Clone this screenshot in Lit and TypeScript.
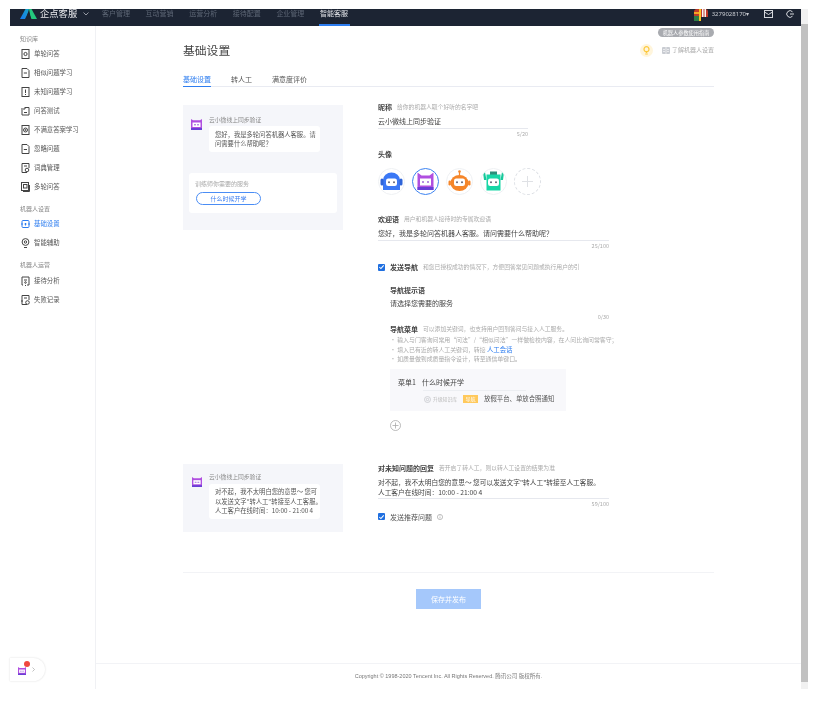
import { LitElement, html, css, svg } from "lit";
import { customElement } from "lit/decorators.js";

const robot = (kind: string, size = 27) => {
  const face = svg`<rect x="8" y="10.5" width="11" height="7.5" rx="2.2" fill="#fff" /><circle cx="11" cy="14.2" r="1" fill="#667" /><circle cx="16" cy="14.2" r="1" fill="#667" />`;
  const inner =
    kind === "blue"
      ? svg`<path d="M5 22 V12 a8.5 7.5 0 0 1 17 0 V22 Z" fill="#3b78f5" /><rect x="2.5" y="10.5" width="3" height="7" rx="1.5" fill="#2f64d8" /><rect x="21.5" y="10.5" width="3" height="7" rx="1.5" fill="#2f64d8" />${face}`
      : kind === "purple"
      ? svg`<path d="M5.5 4.5 L9.5 7.5 H17.5 L21.5 4.5 V22 H5.5 Z" fill="#b04fe0" /><rect x="5.5" y="19" width="16" height="3" fill="#6a3fd6" /><rect x="8" y="10.5" width="11" height="7" fill="#fff" /><circle cx="11" cy="14" r="1" fill="#a06ad8" /><circle cx="16" cy="14" r="1" fill="#a06ad8" />`
      : kind === "orange"
      ? svg`<rect x="12.9" y="3.5" width="1.2" height="4" fill="#f5862a" /><circle cx="13.5" cy="3.5" r="1.3" fill="#f5862a" /><ellipse cx="13.5" cy="15" rx="9" ry="8" fill="#f5862a" /><rect x="2.5" y="12.5" width="2.4" height="5" rx="1.2" fill="#f5862a" /><rect x="22.1" y="12.5" width="2.4" height="5" rx="1.2" fill="#f5862a" />${face}`
      : svg`<rect x="10" y="3.5" width="7" height="3.5" fill="#2d8f7b" /><rect x="6.5" y="6.5" width="14" height="16" fill="#18d6a6" /><path d="M3 4 L5 4 L6.5 12 L4 12 Z" fill="#18c89b" /><path d="M24 4 L22 4 L20.5 12 L23 12 Z" fill="#18c89b" />${face}`;
  return html`<svg width=${size} height=${size} viewBox="0 0 27 27">${inner}</svg>`;
};

const smallBot = (size = 11) => html`<svg width=${size} height=${size} viewBox="0 0 11 11">
  <path d="M0 0 L2 1.3 H9 L11 0 V11 H0 Z" fill="#b04fe0" />
  <rect y="9" width="11" height="2" fill="#6a3fd6" />
  <rect x="1.5" y="3.5" width="8" height="4.5" fill="#fff" />
  <path d="M3 5.8 h2 M6 5.8 h2" stroke="#9a5ad8" stroke-width="1" />
</svg>`;

const sideIcon = (kind: number, color = "#444") => html`<svg width="9" height="10" viewBox="0 0 9 10" fill="none" stroke=${color} stroke-width="1">
  ${kind === 0
    ? svg`<rect x="1" y="0.5" width="7" height="9" /><circle cx="4.5" cy="5" r="1.6" />`
    : kind === 1
    ? svg`<path d="M1 0.5 H6 L8 2.5 V9.5 H1 Z" /><path d="M2.8 5 H6" />`
    : kind === 2
    ? svg`<rect x="1" y="0.5" width="7" height="9" /><path d="M4.5 2.5 V6 M4.5 7 V8" />`
    : kind === 3
    ? svg`<path d="M4 1.5 H8 V9 H1 V4" /><path d="M0 3 H4 V1" /><path d="M3 6.5 H6" />`
    : kind === 4
    ? svg`<rect x="1" y="0.5" width="7" height="9" /><circle cx="4.5" cy="5" r="2" /><circle cx="4.5" cy="5" r=".6" />`
    : kind === 5
    ? svg`<path d="M1 0.5 H6 L8 2.5 V9.5 H1 Z" /><path d="M2.8 5.5 H6" />`
    : kind === 6
    ? svg`<path d="M6 9.5 H1 V0.5 H8 V5" /><circle cx="6" cy="7" r="1.8" /><path d="M3 3 H6" />`
    : kind === 7
    ? svg`<rect x="0.5" y="0.5" width="7" height="8" /><rect x="2.5" y="2.5" width="3.5" height="3.5" /><path d="M8.5 3 V9.5 H2" />`
    : kind === 8
    ? svg`<rect x="1" y="1.5" width="7" height="7" rx="1" /><path d="M0 5 H2 M7 5 H9 M3.5 5 H5.5 M4.5 4 V6.5" />`
    : kind === 9
    ? svg`<circle cx="4.5" cy="4" r="3.4" /><circle cx="4.5" cy="4" r="1.2" /><path d="M3 9.5 H6" />`
    : kind === 10
    ? svg`<path d="M2 9 H1 V1 H8 V9 H6" /><path d="M3 4 H6 M4 9.5 H5" /><circle cx="4.5" cy="6.5" r=".8" />`
    : svg`<path d="M6 9.5 H1 V0.5 H8 V5" /><circle cx="6.5" cy="7.5" r="1.8" /><path d="M3 3 H6 M0 6 H2" />`}
</svg>`;

const check = html`<span class="check"><svg width="8" height="8" viewBox="0 0 8 8" fill="none" stroke="#fff" stroke-width="1.2"><path d="M1.5 4 L3.3 5.8 L6.5 2.2" /></svg></span>`;

const nav = ["客户管理", "互动营销", "运营分析", "接待配置", "企业管理", "智能客服"];
const groups: { label: string; items: [string, number][] }[] = [
  {
    label: "知识库",
    items: [["单轮问答", 0], ["相似问题学习", 1], ["未知问题学习", 2], ["问答测试", 3], ["不满意答案学习", 4], ["忽略问题", 5], ["词典管理", 6], ["多轮问答", 7]],
  },
  { label: "机器人设置", items: [["基础设置", 8], ["智能辅助", 9]] },
  { label: "机器人运营", items: [["接待分析", 10], ["失败记录", 11]] },
];

@customElement("app-root")
export class AppRoot extends LitElement {
  static styles = css`
    :host {
      display: block;
      width: 821px;
      height: 721px;
      background: #fff;
      overflow: hidden;
      font-family: "Noto Sans CJK SC", "Noto Sans", sans-serif;
      color: #333;
      font-size: 7px;
      line-height: 10px;
    }
    .page {
      box-sizing: border-box;
      width: 798px;
      height: 680px;
      margin: 9px 0 0 10px;
      display: flex;
      position: relative;
      filter: blur(0.45px);
    }
    .app { width: 791px; display: flex; flex-direction: column; }
    .scrollbar { width: 7px; background: #f1f1f1; display: flex; flex-direction: column; }
    .thumb { flex: 1; background: #c1c1c1; margin: 15px 0 7px; }
    header { height: 17px; box-sizing: border-box; padding-bottom: 8px; background: #1c2433; display: flex; align-items: center; flex: none; }
    .logo { margin-left: 10px; display: block; align-self: flex-start; }
    .brand { margin-left: 3px; color: #e8e9ec; font-size: 9.3px; width: 37px; white-space: nowrap; line-height: 9px; }
    .chev { margin: 0 8px 0 6px; }
    .nav { display: flex; gap: 15px; height: 17px; margin-left: 5px; align-self: flex-start; }
    .nav span { color: #5d6675; line-height: 9px; height: 15px; white-space: nowrap; width: 28.6px; }
    .nav span.on { color: #e6e8ec; border-bottom: 2px solid #2d7df0; padding: 0 1px; margin: 0 -1px; }
    .user { margin-left: auto; display: flex; align-items: center; color: #c9ccd2; height: 9px; }
    .user svg { display: block; }
    .user .uavatar { align-self: flex-start; }
    .uid { margin: 0 15px 0 4px; font-size: 6px; font-family: "Noto Sans", sans-serif; }
    .mail { margin-right: 13px; }
    .exit { margin-right: 7px; }
    .body { flex: 1; display: flex; min-height: 0; }
    aside { border-right: 1px solid #f0f1f4; padding: 8px 0 0 10px; box-sizing: content-box; width: 75px; }
    .glabel { color: #888; font-size: 6px; height: 10px; line-height: 10px; }
    .group + .group { margin-top: 8px; }
    .group:last-child .glabel { margin-bottom: 1.5px; }
    .item { display: flex; align-items: center; height: 19px; color: #555; font-size: 6.4px; padding-left: 1px; gap: 4px; white-space: nowrap; }
    .item svg { flex: none; }
    .item.on { color: #2d7df0; }
    .main { flex: 1; display: flex; flex-direction: column; min-width: 0; }
    .content { flex: 1; padding: 17px 87px 0 87px; position: relative; }
    .title-row { display: flex; align-items: center; height: 14px; }
    h1 { margin: 0; font-size: 11.8px; font-weight: 400; color: #444; line-height: 14px; }
    .guide { margin-left: auto; display: flex; align-items: center; color: #aaa; font-size: 6px; }
    .bulb { width: 13px; height: 13px; border-radius: 50%; background: #fff5dc; display: flex; align-items: center; justify-content: center; margin-right: 9px; }
    .guide .book { margin: 0 2px 0 0; display: block; }
    .pill { position: absolute; right: 87px; top: 2px; height: 9px; width: 56px; border-radius: 5px; background: #a9abb0; color: #fff; font-size: 5.2px; line-height: 9px; text-align: center; white-space: nowrap; }
    .tabs { display: flex; gap: 20px; height: 15px; box-sizing: border-box; margin-top: 15px; border-bottom: 1px solid #e9ebf2; line-height: 14px; color: #555; }
    .tabs span { height: 15px; box-sizing: border-box; }
    .tabs span.on { color: #2d7df0; border-bottom: 1px solid #2d7df0; }
    .row { display: flex; gap: 35px; align-items: flex-start; }
    .first { margin-top: 15px; }
    .second { margin-top: 32px; }
    .preview { width: 160px; background: #f5f6fa; flex: none; box-sizing: border-box; position: relative; }
    .p1 { height: 125px; margin-top: 3px; padding: 11px 6px 0 8px; }
    .p2 { height: 68px; margin-top: 1px; padding: 9px 6px 0 9px; }
    .msg { display: flex; gap: 7px; }
    .msg > svg { margin-top: 3px; flex: none; }
    .p2 .msg > svg { margin-top: 4px; }
    .name { color: #888; font-size: 5.8px; line-height: 8px; height: 8px; white-space: nowrap; margin-bottom: 2px; }
    .p2 .name { margin-bottom: 3px; }
    .bubble { background: #fff; border-radius: 3px; padding: 3.5px 5px 3.5px 6px; width: 111px; box-sizing: border-box; line-height: 9.5px; color: #555; font-size: 6.3px; white-space: nowrap; }
    .train { margin: 21px 0 0 -2px; background: #fff; border-radius: 3px; height: 40px; padding: 6px 6px 0 6px; box-sizing: border-box; color: #aaa; font-size: 6px; line-height: 9px; }
    .train .btn { width: 65px; height: 13px; margin: 4px 0 0 1px; box-sizing: border-box; border: 1px solid #4a8df5; border-radius: 7px; color: #3a7df0; text-align: center; line-height: 11px; font-size: 6px; }
    .form { width: 231px; flex: none; }
    .label { display: flex; align-items: center; gap: 5px; height: 10px; white-space: nowrap; }
    .label b { font-weight: 700; color: #444; font-size: 7px; }
    .hint { color: #aaa; font-size: 5.8px; }
    .value { color: #444; line-height: 12px; white-space: nowrap; }
    .input { border-bottom: 1px solid #e6e8ee; margin-top: 3px; padding-bottom: 1px; }
    .small { font-size: 6.7px; line-height: 10px; margin-top: 4px; }
    .w150 { width: 150px; }
    .count { text-align: right; color: #aaa; font-size: 5.5px; height: 10px; line-height: 10px; }
    .mt10 { margin-top: 10px; }
    .avatars { display: flex; gap: 7px; margin-top: 9px; }
    .av { width: 27px; height: 27px; border-radius: 50%; border: 1px solid #eef0f3; box-sizing: border-box; display: flex; align-items: center; justify-content: center; overflow: hidden; }
    .av.sel { border-color: #3b82f0; }
    .av.add { border: 1px dashed #dde0e5; }
    .av svg { flex: none; }
    .mt19 { margin-top: 19px; }
    .check { width: 7px; height: 7px; flex: none; background: #1f6fe0; border-radius: 1px; display: flex; align-items: center; justify-content: center; }
    .chk { display: flex; align-items: center; height: 10px; gap: 5px; white-space: nowrap; }
    .chk b { color: #444; font-size: 7px; }
    .chk .plain { color: #555; }
    .mt11 { margin-top: 11px; }
    .mt3 { margin-top: 3px; }
    .mt2 { margin-top: 2px; }
    .sub { margin-left: 12px; }
    .mt13 { margin-top: 13px; }
    .prompt { margin-top: 2px; }
    .notes { margin-top: 1px; color: #aaa; font-size: 5.9px; line-height: 9.5px; white-space: nowrap; }
    .notes a { color: #2d7df0; font-size: 6.4px; }
    .menu { width: 176px; height: 42px; margin-top: 5px; background: #f8f8fb; padding: 8px 8px 0; box-sizing: border-box; }
    .mrow { display: flex; gap: 6px; line-height: 10px; color: #444; }
    .mline { height: 1px; width: 103px; background: #eceef2; margin: 3px 0 0 25px; }
    .act { display: flex; align-items: center; margin: 4px 0 0 26px; height: 9px; white-space: nowrap; }
    .act .lv { color: #bbb; font-size: 4.8px; margin: 0 3px 0 2px; width: 27px; }
    .tag { width: 15px; height: 8px; background: #ffc95c; color: #fff; font-size: 5px; line-height: 8px; text-align: center; margin-right: 6px; }
    .act .t { color: #555; font-size: 6.4px; }
    .plus { display: block; margin-top: 9px; }
    .info { display: block; }
    .rule { height: 1px; background: #f2f3f6; margin-top: 40px; }
    .save { display: block; width: 65px; height: 20px; margin: 16px auto 0; background: #a5c8fb; color: #fff; text-align: center; line-height: 20px; font-size: 7px; }
    footer { height: 26px; box-sizing: border-box; border-top: 1px solid #f2f3f6; flex: none; text-align: center; color: #777; font-size: 5.5px; line-height: 24px; font-family: "Liberation Sans", "Noto Sans CJK SC", sans-serif; }
    .float { position: absolute; left: 0; top: 649px; width: 35px; height: 23px; background: #fff; border-radius: 0 12px 12px 0; box-shadow: 0 0 2px rgba(0, 0, 0, 0.16); display: flex; align-items: center; padding-left: 8px; box-sizing: border-box; gap: 6px; }
    .float > svg:first-child { margin-top: 2px; }
    .dot { position: absolute; left: 14px; top: 3px; width: 6px; height: 6px; border-radius: 50%; background: #f0483e; }
  `;

  render() {
    return html`<div class="page">
      <div class="app">
        <header>
          <svg class="logo" width="17" height="10" viewBox="0 0 17 10">
            <defs><linearGradient id="lg" x1="0" y1="1" x2="1" y2="0"><stop offset="0" stop-color="#1677f0" /><stop offset="1" stop-color="#18a5c8" /></linearGradient></defs>
            <polygon points="0,10 5.5,0 9,0 6,10" fill="url(#lg)" /><polygon points="9,0 11.5,0 17,10 11,10" fill="#24c77e" /><polygon points="5,10 8.5,3 11.5,10" fill="#1c2433" />
          </svg>
          <span class="brand">企点客服</span>
          <svg class="chev" width="6" height="4" viewBox="0 0 6 4" fill="none" stroke="#b5b8c0" stroke-width="0.8"><path d="M.5 .5 L3 3 L5.5 .5" /></svg>
          <div class="nav">${nav.map((n, i) => html`<span class=${i === 5 ? "on" : ""}>${n}</span>`)}</div>
          <div class="user">
            <svg class="uavatar" width="14" height="12" viewBox="0 0 14 12"><rect width="14" height="12" rx="3" fill="#c23a2a" /><rect y="3" width="5" height="2" fill="#f4a623" /><rect x="5" y="0" width="2" height="12" fill="#f4c223" /><rect x="8" y="0" width="1.5" height="8" fill="#f5f5f5" /><rect x="10.5" y="0" width="1.5" height="8" fill="#f5f5f5" /><rect y="7" width="5" height="5" fill="#2d7d46" /><rect x="7" y="8" width="7" height="4" fill="#1c2433" /></svg>
            <span class="uid">3279028170▾</span>
            <svg class="mail" width="9" height="8" viewBox="0 0 9 8" fill="none" stroke="#d5d7dc" stroke-width="1"><rect x=".5" y=".5" width="8" height="7" /><path d="M.5 2 L4.5 4.5 L8.5 2" /></svg>
            <svg class="exit" width="8" height="8" viewBox="0 0 8 8" fill="none" stroke="#d5d7dc" stroke-width="1"><path d="M6.5 1.8 A3.3 3.3 0 1 0 6.5 6.2" /><path d="M4 4 H8" /></svg>
          </div>
        </header>
        <div class="body">
          <aside>
            ${groups.map(
              (g) => html`<div class="group">
                <div class="glabel">${g.label}</div>
                ${g.items.map(
                  ([t, k]) => html`<div class="item ${t === "基础设置" ? "on" : ""}">${sideIcon(k, t === "基础设置" ? "#2d7df0" : "#444")}<span>${t}</span></div>`
                )}
              </div>`
            )}
          </aside>
          <div class="main">
            <div class="content">
              <div class="pill">机器人参数使用指南</div>
              <div class="title-row">
                <h1>基础设置</h1>
                <div class="guide">
                  <span class="bulb"><svg width="7" height="9" viewBox="0 0 7 9" fill="none" stroke="#fcc93f" stroke-width="1.2"><circle cx="3.5" cy="3.2" r="2.5" /><path d="M2.2 8 H4.8 M3.5 5.5 V7" /></svg></span>
                  <svg class="book" width="8" height="7" viewBox="0 0 8 7"><rect width="8" height="7" rx="1" fill="#c9ccd2" /><path d="M4 0 V7 M1 2.5 H3 M5 2.5 H7 M1 4.5 H3 M5 4.5 H7" stroke="#fff" stroke-width=".6" /></svg>
                  <span>了解机器人设置</span>
                </div>
              </div>
              <div class="tabs"><span class="on">基础设置</span><span>转人工</span><span>满意度评价</span></div>

              <div class="row first">
                <div class="preview p1">
                  <div class="msg">
                    ${smallBot()}
                    <div>
                      <div class="name">云小微线上同步验证</div>
                      <div class="bubble">您好，我是多轮问答机器人客服。请<br />问需要什么帮助呢？</div>
                    </div>
                  </div>
                  <div class="train">
                    <div>训练师你需要的服务</div>
                    <div class="btn">什么时候开学</div>
                  </div>
                </div>
                <div class="form">
                  <div class="label"><b>昵称</b><span class="hint">给你的机器人取个好听的名字吧</span></div>
                  <div class="value input w150">云小微线上同步验证</div>
                  <div class="count w150">5/20</div>
                  <div class="label mt10"><b>头像</b></div>
                  <div class="avatars">
                    <div class="av">${robot("blue")}</div>
                    <div class="av sel">${robot("purple")}</div>
                    <div class="av">${robot("orange")}</div>
                    <div class="av">${robot("green")}</div>
                    <div class="av add"><svg width="11" height="11" viewBox="0 0 11 11" stroke="#dfe1e5" stroke-width="1"><path d="M5.5 0 V11 M0 5.5 H11" /></svg></div>
                  </div>
                  <div class="label mt19"><b>欢迎语</b><span class="hint">用户和机器人接待时的专属欢迎语</span></div>
                  <div class="value input">您好，我是多轮问答机器人客服。请问需要什么帮助呢？</div>
                  <div class="count">25/100</div>
                  <div class="chk mt11">${check}<b>发送导航</b><span class="hint">和您已授权成功的情况下，方便回答常见问题或执行用户的引</span></div>
                  <div class="sub">
                    <div class="label mt13"><b>导航提示语</b></div>
                    <div class="value prompt">请选择您需要的服务</div>
                    <div class="count mt3">0/30</div>
                    <div class="label mt2"><b>导航菜单</b><span class="hint">可以添加关键词，也支持用户回到答问与接入人工服务。</span></div>
                    <div class="notes">
                      <div>· 输入与门客询问常用“问法”/“相似问法”一样做检校内容，在人问比询问常客守；</div>
                      <div>· 填入已有近的转人工关键词，转接 <a>人工会话</a></div>
                      <div>· 如质量做到成质量指令设计，转至通信单键口。</div>
                    </div>
                    <div class="menu">
                      <div class="mrow"><span>菜单1</span><span>什么时候开学</span></div>
                      <div class="mline"></div>
                      <div class="act">
                        <svg width="7" height="7" viewBox="0 0 7 7" fill="none" stroke="#c5c7cc" stroke-width=".8"><circle cx="3.5" cy="3.5" r="3" /><circle cx="3.5" cy="3.5" r="1.2" /></svg>
                        <span class="lv">升级知识库</span><span class="tag">导航</span><span class="t">放假平台、单放合照通知</span>
                      </div>
                    </div>
                    <svg class="plus" width="11" height="11" viewBox="0 0 11 11" fill="none" stroke="#aaa" stroke-width=".8"><circle cx="5.5" cy="5.5" r="5" /><path d="M5.5 2.5 V8.5 M2.5 5.5 H8.5" /></svg>
                  </div>
                </div>
              </div>

              <div class="row second">
                <div class="preview p2">
                  <div class="msg">
                    ${smallBot(10)}
                    <div>
                      <div class="name">云小微线上同步验证</div>
                      <div class="bubble">对不起，我不太明白您的意思～ 您可<br />以发送文字"转人工"转接至人工客服。<br />人工客户在线时间：10:00 - 21:00 4</div>
                    </div>
                  </div>
                </div>
                <div class="form">
                  <div class="label"><b>对未知问题的回复</b><span class="hint">若开启了转人工，则以转人工设置的结果为准</span></div>
                  <div class="value input small">对不起，我不太明白您的意思～ 您可以发送文字"转人工"转接至人工客服。<br />人工客户在线时间：10:00 - 21:00 4</div>
                  <div class="count">59/100</div>
                  <div class="chk mt3">${check}<span class="plain">发送推荐问题</span>
                    <svg class="info" width="6" height="6" viewBox="0 0 6 6" fill="none" stroke="#999" stroke-width=".6"><circle cx="3" cy="3" r="2.6" /><path d="M3 2.5 V4.5 M3 1.3 V2" /></svg></div>
                </div>
              </div>

              <div class="rule"></div>
              <div class="save">保存并发布</div>
            </div>
            <footer>Copyright © 1998-2020 Tencent Inc. All Rights Reserved. 腾讯公司 版权所有.</footer>
          </div>
        </div>
      </div>
      <div class="scrollbar"><div class="thumb"></div></div>
      <div class="float">${smallBot(8)}<span class="dot"></span><svg width="3" height="5" viewBox="0 0 3 5" fill="none" stroke="#999" stroke-width=".6"><path d="M.5 .5 L2.5 2.5 L.5 4.5" /></svg></div>
    </div>`;
  }
}
